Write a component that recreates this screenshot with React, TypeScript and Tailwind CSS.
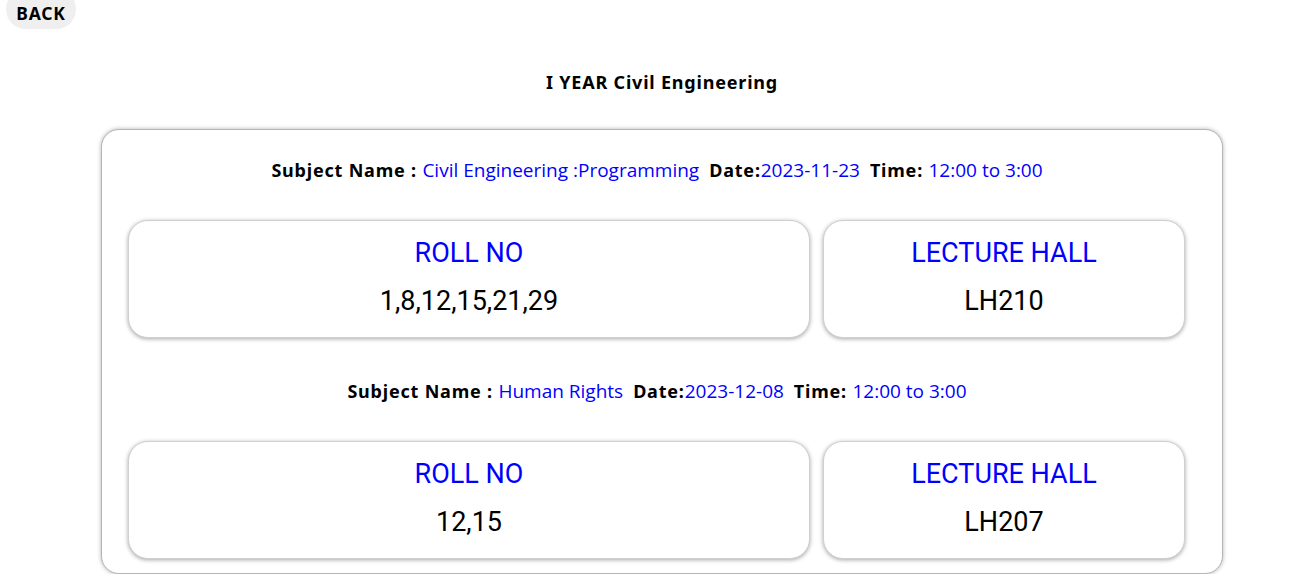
const exams = [
  {
    subject: "Civil Engineering :Programming",
    date: "2023-11-23",
    time: "12:00 to 3:00",
    rolls: "1,8,12,15,21,29",
    hall: "LH210",
  },
  {
    subject: "Human Rights",
    date: "2023-12-08",
    time: "12:00 to 3:00",
    rolls: "12,15",
    hall: "LH207",
  },
]

const label = "font-['Noto_Sans',sans-serif] font-bold tracking-[0.8px] text-black"
const body = "font-['Open_Sans',sans-serif] text-[19px] text-[#0000ff]"

function InfoCard({ title, value, className }: { title: string; value: string; className: string }) {
  return (
    <div
      className={`${className} h-[118px] rounded-[20px] border border-[#d0d0d0] bg-white shadow-[0_1px_4px_rgba(0,0,0,0.35)] flex flex-col items-center pt-[15px] font-['Roboto',sans-serif] text-[27px]`}
    >
      <div className="text-[#0000ff] leading-[34px]">{title}</div>
      <div className="text-black leading-[34px] mt-[14px]">{value}</div>
    </div>
  )
}

export default function App() {
  return (
    <div className="w-[1316px] min-h-[584px] bg-white pl-[8px]">
      <button className={`block -ml-[2px] -mt-[11px] h-[40px] w-[70px] rounded-full bg-[#efefef] pt-[8px] text-[17.5px] ${label}`}>
        BACK
      </button>

      <h2 className={`mt-[40px] text-center text-[18px] leading-[26px] ${label}`}>I YEAR Civil Engineering</h2>

      <div className="mx-auto mt-[34px] w-[1122px] rounded-[18px] border border-[#b5b5b5] bg-white shadow-[0_0_4px_rgba(0,0,0,0.3)] pt-[25px] pb-[14px] pl-[26px] pr-[36px]">
        {exams.map((e, i) => (
          <div key={i} className={i > 0 ? "mt-[38px]" : ""}>
            <p className="text-center text-[18px] leading-[30px]">
              <span className={label}>Subject Name : </span>
              <span className={body}>{e.subject}</span>
              <span className={`${label} ml-[10px]`}>Date:</span>
              <span className={body}>{e.date}</span>
              <span className={`${label} ml-[10px]`}>Time: </span>
              <span className={body}>{e.time}</span>
            </p>
            <div className="mt-[35px] flex gap-[13px]">
              <InfoCard className="w-[682px]" title="ROLL NO" value={e.rolls} />
              <InfoCard className="w-[362px]" title="LECTURE HALL" value={e.hall} />
            </div>
          </div>
        ))}
      </div>
    </div>
  )
}
